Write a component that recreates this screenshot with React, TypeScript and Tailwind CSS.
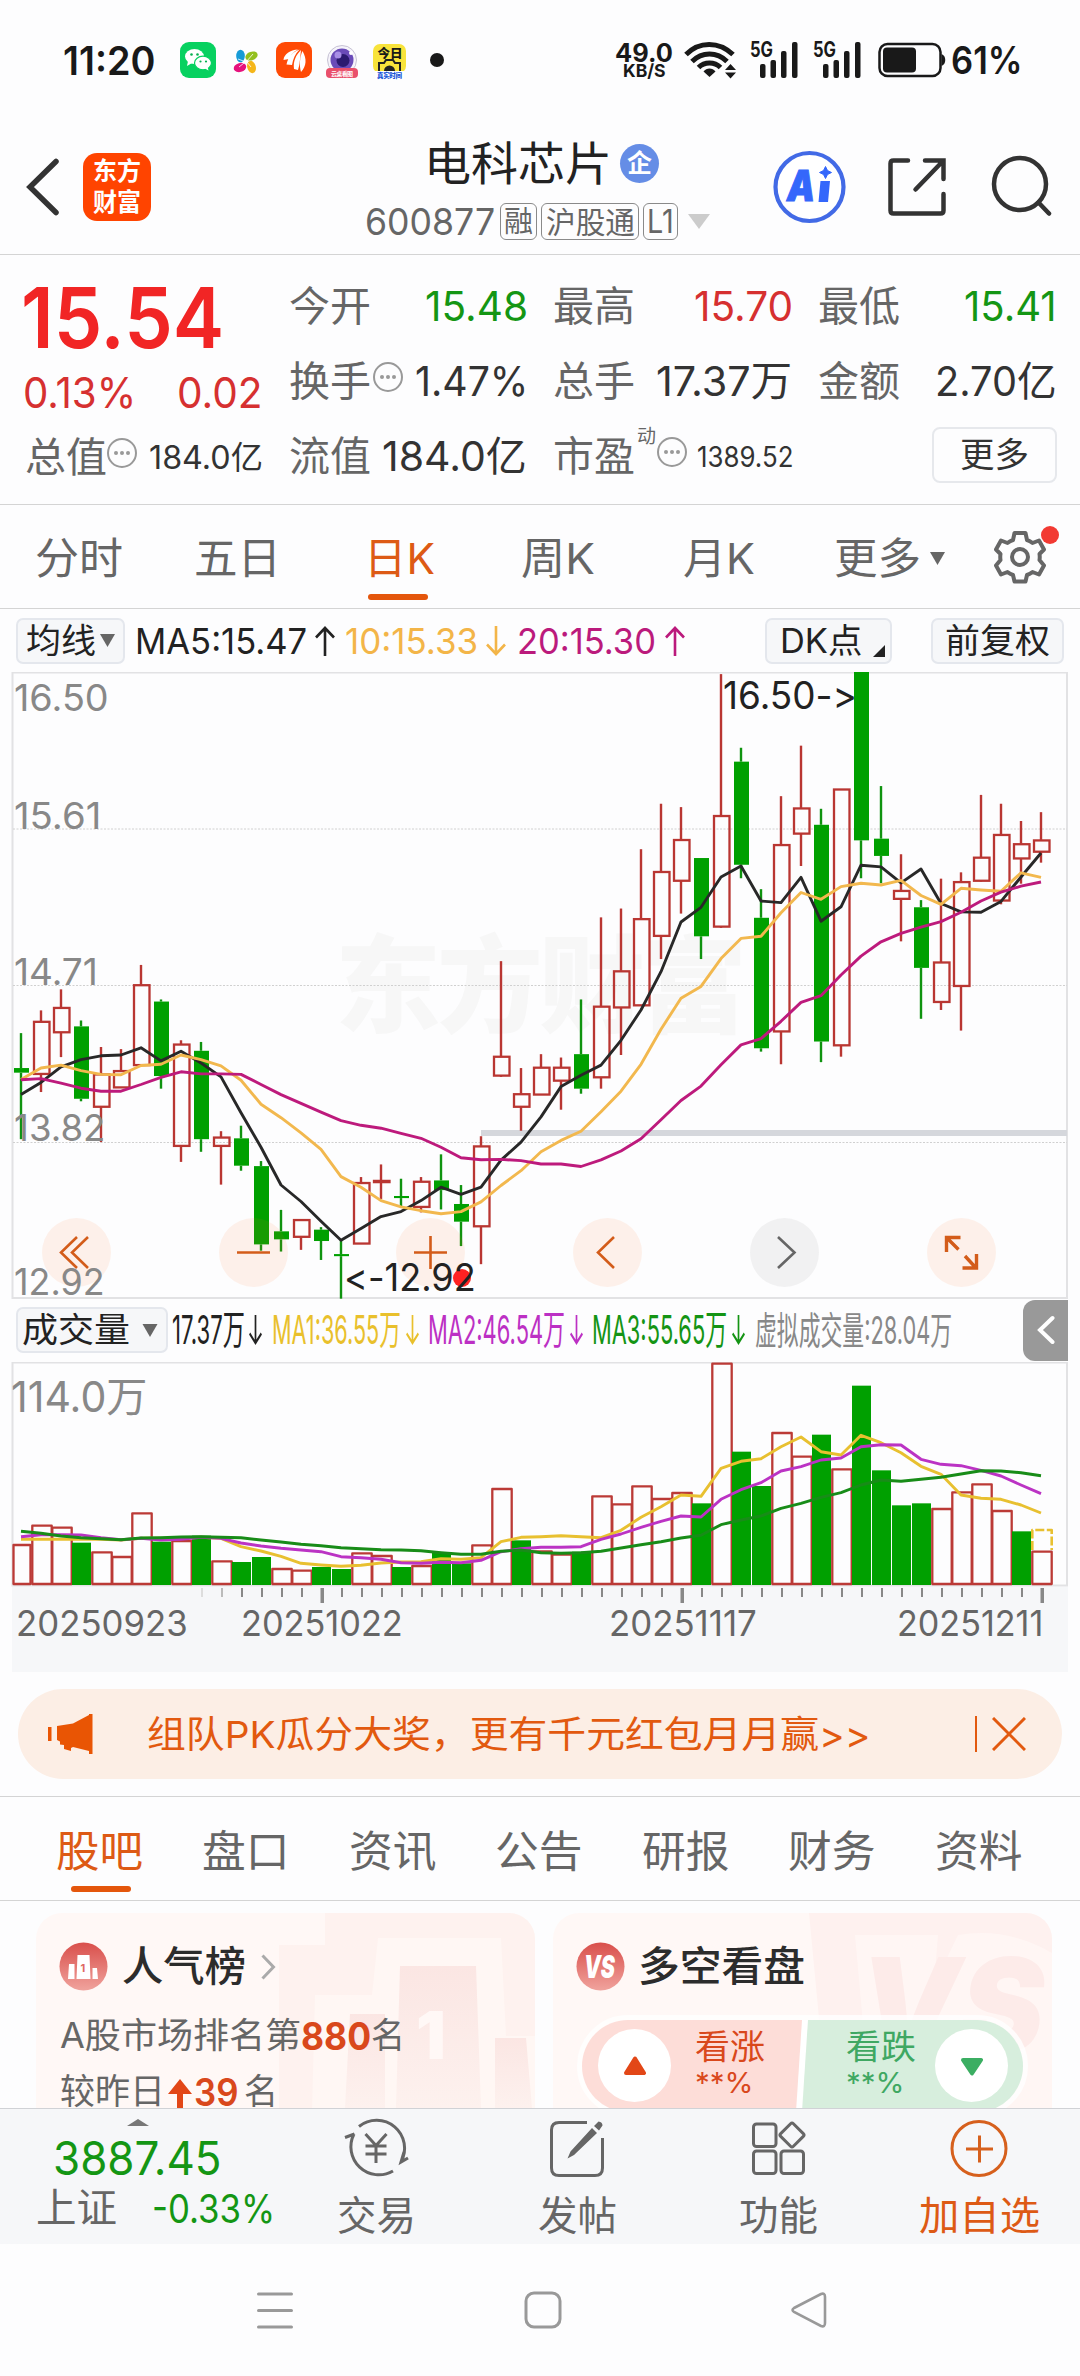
import React, { useLayoutEffect, useRef, useState } from "react";

/* Single line of text condensed or stretched to an exact width. */
function Fit({ w, className = "", children }: { w: number; className?: string; children: React.ReactNode }) {
  const ref = useRef<HTMLSpanElement>(null);
  const [scale, setScale] = useState(1);
  useLayoutEffect(() => {
    if (ref.current) setScale(w / ref.current.offsetWidth);
  }, [w]);
  return (
    <span className={"inline-block shrink-0 leading-none whitespace-nowrap " + className} style={{ width: w }}>
      <span ref={ref} className="inline-block origin-left" style={{ transform: `scaleX(${scale})` }}>
        {children}
      </span>
    </span>
  );
}

type Candle = [number, number, number, number, number];

/* [rising, high, body top, body bottom, low] in chart ticks */
const CANDLES: Candle[] = [
  [0, 886, 969, 980, 1138], [1, 832, 858, 983, 1026], [1, 782, 825, 884, 943], [0, 856, 870, 1042, 1048],
  [1, 919, 983, 1061, 1145], [1, 924, 975, 1015, 1015], [1, 724, 771, 962, 962], [0, 806, 811, 988, 1018],
  [1, 903, 912, 1154, 1192], [0, 907, 928, 1138, 1168], [1, 1119, 1133, 1154, 1246], [0, 1106, 1136, 1201, 1213],
  [0, 1190, 1202, 1388, 1403], [0, 1306, 1357, 1376, 1405], [1, 1328, 1329, 1370, 1401], [0, 1347, 1353, 1380, 1425],
  [0, 1378, 1411, 1416, 1517], [1, 1228, 1241, 1386, 1386], [1, 1198, 1236, 1240, 1280], [0, 1232, 1273, 1278, 1298],
  [1, 1228, 1238, 1299, 1312], [0, 1174, 1236, 1259, 1305], [0, 1247, 1292, 1334, 1392], [1, 1131, 1154, 1345, 1435],
  [1, 715, 941, 987, 990], [1, 969, 1030, 1061, 1118], [1, 936, 967, 1032, 1032], [1, 944, 967, 999, 1068],
  [0, 806, 936, 1018, 1030], [1, 611, 822, 991, 1018], [1, 590, 738, 825, 938], [1, 449, 614, 820, 820],
  [1, 341, 502, 655, 710], [1, 349, 426, 524, 602], [0, 469, 470, 656, 710], [1, 33, 369, 633, 636],
  [0, 208, 241, 486, 518], [0, 544, 612, 922, 930], [1, 323, 438, 882, 960], [1, 203, 351, 412, 489],
  [0, 353, 391, 906, 955], [1, 306, 306, 915, 942], [0, 28, 28, 428, 518], [0, 299, 424, 465, 530],
  [1, 461, 547, 567, 668], [0, 570, 587, 731, 852], [1, 519, 717, 812, 831], [1, 504, 526, 774, 880],
  [1, 320, 468, 524, 526], [1, 341, 414, 571, 580], [1, 382, 436, 471, 531], [1, 361, 427, 455, 481],
];

const MA5 = [1032, 1003, 966, 949, 940, 938, 921, 952, 929, 957, 990, 1075, 1157, 1247, 1286, 1333, 1378, 1350, 1322, 1310, 1284, 1252, 1269, 1252, 1188, 1145, 1085, 1013, 986, 962, 903, 831, 740, 622, 587, 515, 489, 572, 576, 516, 620, 586, 487, 491, 529, 496, 578, 598, 599, 573, 515, 458];
const MA10 = [996, 969, 962, 975, 984, 985, 963, 960, 938, 949, 964, 998, 1055, 1087, 1123, 1162, 1227, 1252, 1284, 1299, 1308, 1315, 1310, 1287, 1248, 1213, 1168, 1141, 1119, 1073, 1024, 960, 877, 803, 775, 709, 661, 656, 600, 552, 568, 538, 530, 534, 523, 559, 580, 542, 546, 549, 505, 516];
const MA20 = [997, 994, 1005, 1017, 1024, 1024, 1008, 991, 978, 983, 983, 984, 1008, 1032, 1053, 1074, 1094, 1105, 1112, 1124, 1136, 1157, 1182, 1187, 1186, 1189, 1197, 1197, 1203, 1187, 1166, 1137, 1092, 1046, 1012, 961, 914, 899, 858, 813, 797, 748, 703, 669, 649, 634, 621, 599, 572, 551, 537, 527];

const VOLUMES = [762, 704, 710, 758, 784, 798, 667, 755, 750, 737, 811, 816, 801, 834, 839, 831, 837, 787, 795, 831, 825, 788, 820, 763, 594, 751, 781, 791, 785, 616, 640, 586, 624, 606, 640, 218, 485, 588, 426, 497, 434, 535, 287, 541, 646, 640, 654, 604, 580, 660, 724, 782];
const FALLING_VOLUME = new Set([3, 7, 9, 11, 12, 15, 16, 19, 21, 22, 25, 28, 34, 36, 37, 40, 42, 43, 44, 45, 50]);
const VMA1 = [748, 748, 748, 748, 748, 750, 745, 745, 745, 742, 745, 770, 783, 799, 820, 825, 829, 826, 819, 816, 815, 806, 808, 803, 755, 742, 740, 737, 740, 743, 721, 682, 650, 615, 619, 535, 514, 506, 470, 441, 485, 495, 436, 458, 488, 529, 553, 615, 625, 628, 645, 669];
const VMA2 = [740, 734, 734, 735, 743, 749, 745, 750, 748, 742, 745, 759, 768, 775, 780, 785, 800, 803, 808, 818, 820, 817, 818, 811, 785, 776, 772, 772, 770, 748, 732, 712, 694, 678, 681, 628, 599, 578, 543, 530, 510, 504, 470, 464, 465, 508, 523, 527, 541, 558, 585, 611];
const VMA3 = [724, 730, 738, 743, 746, 749, 744, 743, 741, 740, 742, 743, 750, 756, 763, 767, 773, 776, 779, 780, 782, 788, 793, 793, 784, 780, 788, 790, 788, 784, 774, 764, 755, 744, 736, 704, 690, 678, 655, 640, 622, 608, 585, 570, 574, 568, 562, 552, 542, 543, 548, 557];

const cx = (i: number) => 21 + i * 20;
const py = (v: number) => (v - 28) / 2.376;
const vy = (v: number) => (v - 216) / 3;
const line = (d: number[], y: (v: number) => number) => d.map((v, i) => `${cx(i)},${y(v).toFixed(1)}`).join(" ");

function StatusBar() {
  const signal = (
    <svg width="48" height="38" viewBox="0 0 48 38" fill="#191919" className="shrink-0 overflow-visible">
      <text x="0" y="16" fontFamily="Inter" fontWeight="700" fontSize="21" textLength="23" lengthAdjust="spacingAndGlyphs">5G</text>
      <rect x="10" y="23" width="5.500" height="14" rx="2" />
      <rect x="20.500" y="19" width="5.500" height="18" rx="2" />
      <rect x="31" y="10" width="5.500" height="27" rx="2" />
      <rect x="42" y="1" width="5.500" height="36" rx="2" />
    </svg>
  );
  return (
    <div className="flex h-[120px] items-center text-[#191919]">
      <Fit w={92} className="ml-[63px] text-[39px] font-semibold">11:20</Fit>
      <svg className="ml-[25px] shrink-0" width="36" height="36" viewBox="0 0 36 36">
        <rect width="36" height="36" rx="9" fill="#07d160" />
        <g fill="#fff">
          <ellipse cx="14.500" cy="14.500" rx="9.500" ry="7.500" />
          <path d="M8 19l-1 5 5-3z" />
          <ellipse cx="23" cy="21" rx="8.500" ry="6.800" stroke="#07d160" strokeWidth="1.200" />
          <path d="M25 26.500l3.500 2-1-4z" />
        </g>
        <g fill="#07b050"><circle cx="11.500" cy="12.500" r="1.300" /><circle cx="17.500" cy="12.500" r="1.300" /><circle cx="20.500" cy="19.500" r="1.100" /><circle cx="26" cy="19.500" r="1.100" /></g>
      </svg>
      <svg className="ml-[17px] mt-1 shrink-0" width="26" height="26" viewBox="0 0 26 26">
        <ellipse cx="7.500" cy="7" rx="4.300" ry="6.300" fill="#169bd7" />
        <ellipse cx="18.500" cy="7" rx="6.300" ry="4.300" fill="#93c01f" transform="rotate(-20 18.500 7)" />
        <ellipse cx="7" cy="18.500" rx="6.300" ry="4.500" fill="#e6127d" transform="rotate(-15 7 18.500)" />
        <ellipse cx="18.500" cy="18" rx="4.300" ry="6.300" fill="#f5b61a" transform="rotate(-15 18.500 18)" />
        <path d="M5 10l8 3 7-8M11 14l-5 4M14 13l4 5" stroke="#fff" strokeWidth=".8" fill="none" />
      </svg>
      <svg className="ml-[17px] shrink-0" width="36" height="36" viewBox="0 0 36 36">
        <rect width="36" height="36" rx="9" fill="#ff4a05" />
        <path d="M7.500 18C8 12 14 8 22 7.500 17 10 14 14 13 17z M10.500 22.500C12 15 17 10 23.500 7.500 19 12 17 17 16 23z M18 27C17 19 20 13 25 8c-1 8-1 14-3 20z M25 30c-2-7-1-16 1.500-21 4.500 8 4 15-1.500 21z" fill="#fff" />
      </svg>
      <svg className="mt-1 ml-[13px] shrink-0" width="34" height="34" viewBox="0 0 34 34">
        <circle cx="17" cy="15" r="14.500" fill="#f5f3fa" stroke="#b9b4c9" strokeWidth=".8" />
        <circle cx="17" cy="15" r="11.500" fill="#6a4bb8" />
        <circle cx="18" cy="15.500" r="6.500" fill="#2c1a70" />
        <circle cx="13" cy="10" r="3.500" fill="#a88ee6" />
        <circle cx="26" cy="8" r="2" fill="#fff" />
        <rect x="1" y="23" width="32" height="10" rx="4" fill="#e9506c" />
        <text x="6" y="30.500" fontSize="6" fill="#fff" fontWeight="700" textLength="22" fontFamily="Noto Sans CJK SC">云桌看图</text>
      </svg>
      <svg className="mt-1 ml-[13px] shrink-0 overflow-visible" width="36" height="36" viewBox="0 0 36 36">
        <rect x="1" width="33" height="29" rx="7" fill="#f8e33b" />
        <text x="5.500" y="13.500" fontSize="12.500" fill="#191919" fontWeight="900" textLength="25" fontFamily="Noto Sans CJK SC">今日</text>
        <path d="M7 27v-8h5l2-3h7l2 3h5v8" fill="none" stroke="#222" strokeWidth="2" />
        <path d="M12 27a5.500 5.500 0 0 1 11 0z" fill="#222" />
        <rect x="3" y="27" width="29" height="8" fill="#fff" />
        <text x="5" y="34" fontSize="6.500" fill="#1553d8" fontWeight="900" textLength="25" fontFamily="Noto Sans CJK SC">真实时间</text>
      </svg>
      <span className="ml-[22px] h-[14px] w-[14px] rounded-full bg-[#191919]" />
      <div className="ml-[171px] flex flex-col items-center">
        <Fit w={58} className="h-[22px] pt-px text-[25px] leading-[20px] font-bold">49.0</Fit>
        <Fit w={43} className="h-[18px] text-[18px] font-bold">KB/S</Fit>
      </div>
      <svg className="ml-[11px] shrink-0" width="52" height="38" viewBox="0 0 52 38" fill="none" stroke="#191919" strokeWidth="5">
        <path d="M2 13.500C15 0 35 0 49 13.500" />
        <path d="M8 20.500c10-10 25-10 35 0" />
        <path d="M14.500 26.500c6-6 16-6 22 0" />
        <path d="M25.500 36l-6-5.500c3-4 9-4 12 0z" fill="#191919" stroke="none" />
        <path d="M41 29l5.500-6 5.500 6zM41 31.500l5.500 6 5.500-6z" fill="#191919" stroke="none" />
      </svg>
      <div className="ml-[14px]">{signal}</div>
      <div className="ml-[15px]">{signal}</div>
      <svg className="ml-[17px] shrink-0" width="68" height="36" viewBox="0 0 68 36">
        <rect x="1.500" y="2" width="61" height="32" rx="8" fill="none" stroke="#191919" strokeWidth="2.500" />
        <rect x="5" y="5.500" width="33" height="25" rx="4" fill="#191919" />
        <path d="M63.500 12c5 1.500 5 10.500 0 12z" fill="#191919" />
      </svg>
      <Fit w={72} className="ml-[5px] text-[38px] font-semibold">61%</Fit>
    </div>
  );
}

function Header() {
  const tag = "flex h-[37px] items-center justify-center rounded-[6px] border-[1.500px] border-[#8a8a8a] text-[#666]";
  return (
    <div className="flex h-[135px] items-center border-b border-[#d4d4d4]">
      <svg className="ml-[25px] shrink-0" width="36" height="60" viewBox="0 0 36 60" fill="none" stroke="#333" strokeWidth="5.500" strokeLinecap="round">
        <path d="M31 4.500L5 30l26 25.500" />
      </svg>
      <div className="ml-[22px] flex h-[68px] w-[68px] shrink-0 flex-col items-center justify-center rounded-[14px] bg-[#ff4400] text-[25px] leading-[29px] font-bold text-white">
        <Fit w={48} className="h-[29px]">东方</Fit>
        <Fit w={48} className="h-[27px] pt-0.5">财富</Fit>
      </div>
      <div className="mt-[6px] ml-[214px] flex w-[346px] shrink-0 flex-col">
        <div className="flex items-center pl-[59px]">
          <Fit w={188} className="text-[46px] text-[#222]">电科芯片</Fit>
          <span className="ml-[8px] flex h-[39px] w-[39px] items-center justify-center rounded-full bg-[#658de6] text-[25px] leading-none font-bold text-white">企</span>
        </div>
        <div className="mt-[17px] flex items-center">
          <Fit w={130} className="text-[37px] text-[#666]">600877</Fit>
          <span className={tag + " ml-[5px] w-[37px] text-[29px]"}>融</span>
          <span className={tag + " ml-[4px] w-[98px]"}><Fit w={89} className="text-[30px]">沪股通</Fit></span>
          <span className={tag + " ml-[4px] w-[35px]"}><Fit w={27} className="text-[33px]">L1</Fit></span>
          <svg className="ml-[10px]" width="22" height="15" viewBox="0 0 22 15"><path d="M0 0h22L11 15z" fill="#ccc" /></svg>
        </div>
      </div>
      <svg className="ml-[62px] shrink-0" width="74" height="74" viewBox="0 0 74 74">
        <circle cx="36.500" cy="37" r="34" fill="#fff" stroke="#426ae6" strokeWidth="4.200" />
        <g fill="#3467fb" fontFamily="Inter" fontWeight="900" fontStyle="italic">
          <text x="14" y="51" fontSize="42" stroke="#3467fb" textLength="28" lengthAdjust="spacingAndGlyphs">A</text>
          <path d="M47.500 31h9.500l-2 21h-9.500z" />
          <path d="M52.500 16.500l2 4 4 2-4 2-2 4-2-4-4-2 4-2z" stroke="#3467fb" />
        </g>
      </svg>
      <svg className="ml-[40px] shrink-0" width="60" height="62" viewBox="0 0 60 62" fill="none" stroke="#333" strokeWidth="4.500" strokeLinecap="round">
        <path d="M21 4.500H6.500Q3.500 4.500 3.500 7.500V54.500Q3.500 57.500 6.500 57.500H53.500Q56.500 57.500 56.500 54.500V38" />
        <path d="M38 4.500H56.500V23M56 5L28.500 33.500" />
      </svg>
      <svg className="ml-[43px] shrink-0" width="62" height="64" viewBox="0 0 62 64" fill="none" stroke="#333" strokeWidth="4.500" strokeLinecap="round">
        <circle cx="30" cy="29" r="26" />
        <path d="M48.500 47.500L59 58.500" />
      </svg>
    </div>
  );
}

function Dots() {
  return (
    <svg className="mb-[10px] shrink-0" width="30" height="30" viewBox="0 0 30 30">
      <circle cx="15" cy="15" r="14" fill="none" stroke="#999" strokeWidth="2" />
      <g fill="#999"><circle cx="9" cy="15" r="2" /><circle cx="15" cy="15" r="2" /><circle cx="21" cy="15" r="2" /></g>
    </svg>
  );
}

const row = "flex h-[75px] items-center text-[41px] text-[#333]";
const label = "text-[#666]";

function Quote() {
  return (
    <div className="flex h-[250px] gap-[26px] border-b border-[#d4d4d4] pt-[14px] pl-[25px] text-[#333]">
      <div className="w-[238px]">
        <div className="flex h-[98px] items-center"><Fit w={203} className="-ml-[4px] text-[84px] font-semibold text-[#f12525]">15.54</Fit></div>
        <div className="flex h-[51px] items-center justify-between text-[42px] text-[#d63030]">
          <Fit w={113} className="-ml-[2px]">0.13%</Fit><Fit w={86}>0.02</Fit>
        </div>
        <div className={row + " mt-0.5"}>
          <Fit w={82} className={label}>总值</Fit><Dots />
          <Fit w={114} className="ml-auto text-[32px]">184.0亿</Fit>
        </div>
      </div>
      <div className="w-[238px]">
        <div className={row + " justify-between"}><Fit w={82} className={label}>今开</Fit><Fit w={103} className="-mr-px text-[#149614]">15.48</Fit></div>
        <div className={row}><Fit w={82} className={label}>换手</Fit><span className="ml-0.5 flex"><Dots /></span><Fit w={113} className="-mr-px ml-auto">1.47%</Fit></div>
        <div className={row + " justify-between"}><Fit w={82} className={label}>流值</Fit><Fit w={145}>184.0亿</Fit></div>
      </div>
      <div className="w-[239px]">
        <div className={row + " justify-between"}><Fit w={82} className={label}>最高</Fit><Fit w={99} className="-mr-px text-[#d63030]">15.70</Fit></div>
        <div className={row + " justify-between"}><Fit w={82} className={label}>总手</Fit><Fit w={136}>17.37万</Fit></div>
        <div className={row}>
          <Fit w={82} className={label}>市盈</Fit>
          <span className="mb-[40px] ml-0.5 text-[19px] leading-none text-[#666]">动</span>
          <span className="ml-px flex"><Dots /></span>
          <Fit w={96} className="-mr-px ml-auto text-[28px]">1389.52</Fit>
        </div>
      </div>
      <div className="w-[239px]">
        <div className={row + " justify-between"}><Fit w={82} className={label}>最低</Fit><Fit w={93} className="text-[#149614]">15.41</Fit></div>
        <div className={row + " justify-between"}><Fit w={82} className={label}>金额</Fit><Fit w={122}>2.70亿</Fit></div>
        <div className={row + " justify-end"}>
          <div className="mb-[4px] flex h-[56px] w-[125px] items-center justify-center rounded-[8px] border-2 border-[#e6e8ec]">
            <Fit w={69} className="text-[34px]">更多</Fit>
          </div>
        </div>
      </div>
    </div>
  );
}

function PeriodTabs() {
  return (
    <div className="relative flex h-[104px] items-center border-b border-[#d4d4d4] pt-1 text-[43px] text-[#666]">
      <Fit w={88} className="ml-[35px]">分时</Fit>
      <Fit w={87} className="ml-[71px]">五日</Fit>
      <Fit w={71} className="ml-[83px] text-[#dd5a15]">日K</Fit>
      <Fit w={74} className="ml-[86px]">周K</Fit>
      <Fit w={72} className="ml-[88px]">月K</Fit>
      <Fit w={87} className="ml-[79px]">更多</Fit>
      <svg className="ml-[9px]" width="15" height="13" viewBox="0 0 15 13"><path d="M0 0h15L7.500 13z" fill="#666" /></svg>
      <svg className="mb-1 ml-[48px]" width="54" height="54" viewBox="-27 -27 54 54" fill="none" stroke="#666" strokeWidth="4" strokeLinejoin="round">
        <path d="M-5.500-24H5.500L7-17Q10-16 12.500-14L19-16.500 24-7.500 19.500-3Q20 0 19.500 3L24 8.500 19 17.500 12.500 15Q10 17 7 18L5.500 24.500H-5.500L-7 18Q-10 17-12.500 15L-19 17.500-24 8.500-19.500 3Q-20 0-19.500-3L-24-7.500-19-16.500-12.500-14Q-10-16-7-17z" />
        <circle r="8" />
      </svg>
      <span className="absolute top-[21px] left-[1041px] h-[18px] w-[18px] rounded-full bg-[#f23a33]" />
      <span className="absolute bottom-[8px] left-[368px] h-[6px] w-[60px] rounded-full bg-[#e4560c]" />
    </div>
  );
}

function Arrow({ up, color, w = 20, className = "" }: { up?: boolean; color: string; w?: number; className?: string }) {
  return (
    <svg className={"shrink-0 " + className} width={w} height="30" viewBox="0 0 20 30" preserveAspectRatio="none" fill="none" stroke={color} strokeWidth="2.600">
      {up ? <path d="M10 30V2M1 11.500L10 2l9 9.500" /> : <path d="M10 0v28M1 18.500L10 28l9-9.500" />}
    </svg>
  );
}

const pill = "flex h-[46px] shrink-0 items-center rounded-[7px] border-2 border-[#e4e7ed] bg-[#f6f7f9] text-[34px] text-[#222]";

function AverageRow() {
  return (
    <div className="flex h-[63px] items-center text-[36px]">
      <div className={pill + " ml-[16px] w-[109px] pl-[8px]"}>
        <Fit w={70}>均线</Fit>
        <svg className="ml-[4px]" width="15" height="13" viewBox="0 0 15 13"><path d="M0 0h15L7.500 13z" fill="#666" /></svg>
      </div>
      <Fit w={172} className="ml-[10px] text-[#222]">MA5:15.47</Fit>
      <Arrow up color="#222" className="ml-[8px]" />
      <Fit w={133} className="ml-[10px] text-[#f3b548]">10:15.33</Fit>
      <Arrow color="#f3b548" className="ml-[8px]" />
      <Fit w={139} className="ml-[11px] text-[#bb1a7c]">20:15.30</Fit>
      <Arrow up color="#bb1a7c" className="ml-[9px]" />
      <div className={pill + " ml-[80px] w-[127px] pl-[13px]"}>
        <Fit w={82}>DK点</Fit>
        <svg className="mt-[21px] ml-[11px]" width="12" height="12" viewBox="0 0 12 12"><path d="M12 0v12H0z" fill="#222" /></svg>
      </div>
      <div className={pill + " ml-[39px] w-[133px] justify-center"}><Fit w={105}>前复权</Fit></div>
    </div>
  );
}

function PriceChart() {
  const labels: [string, number, string][] = [
    ["16.50", 95, "top-[7px]"], ["15.61", 87, "top-[125px]"], ["14.71", 84, "top-[281px]"], ["13.82", 91, "top-[437px]"], ["12.92", 91, "top-[591px]"],
  ];
  return (
    <div className="relative h-[626px]">
      <svg className="block" width="1080" height="627" viewBox="0 0 1080 627">
        <text x="335" y="352" fontSize="106" fontWeight="900" fontFamily="Noto Sans CJK SC" fill="#f7f7f7" textLength="412">东方财富</text>
        <rect x="12.500" y="0.500" width="1054.500" height="625.500" fill="none" stroke="#e2e2e4" strokeWidth="2" />
        {[157, 313.500, 470.500].map((y) => (
          <line key={y} x1="13" x2="1067" y1={y} y2={y} stroke="#d0d0d0" strokeDasharray="2 1.500" />
        ))}
        <rect x="481" y="458" width="586" height="6" fill="#d5d7dc" />
        {CANDLES.map(([up, h, t, b, l], i) => {
          const c = up ? "#b93632" : "#0f930f";
          return (
            <g key={i}>
              {py(t) - py(h) > 0.5 && <line x1={cx(i)} x2={cx(i)} y1={py(h)} y2={py(t)} stroke={c} strokeWidth="2.400" />}
              {py(l) - py(b) > 0.5 && <line x1={cx(i)} x2={cx(i)} y1={py(b)} y2={py(l)} stroke={c} strokeWidth="2.400" />}
              {up ? (
                <rect x={cx(i) - 7} y={py(t) + 0.5} width="15.500" height={Math.max(1, py(b) - py(t) - 0.5)} fill="none" stroke={c} strokeWidth="2.300" />
              ) : (
                <rect x={cx(i) - 7} y={py(t)} width="15" height={py(b) - py(t)} fill="#00a000" />
              )}
            </g>
          );
        })}
        <g fill="none" strokeWidth="2.900" strokeLinejoin="round">
          <polyline points={line(MA5, py)} stroke="#282828" />
          <polyline points={line(MA10, py)} stroke="#f2b84e" />
          <polyline points={line(MA20, py)} stroke="#bd1a7c" />
        </g>
        {[76.500, 253.500, 430.500, 607.500, 784.500, 961.500].map((x, i) => (
          <circle key={x} cx={x} cy="580.500" r="34.500" fill={i === 4 ? "#777" : "#ff6a20"} fillOpacity="0.090" />
        ))}
        <g fill="none" stroke="#d35c1a" strokeWidth="2.600">
          <path d="M77 565L61 580.500l16 15.500M88 565L72 580.500l16 15.500" />
          <path d="M237 580.500h33M414 580.500h33M430.500 564v33" />
          <path d="M614 565l-16 15.500 16 15.500" />
          <path d="M778 565l16.500 15.500-16.500 15.500" stroke="#666" />
          <path d="M946.500 580v-14.500h14M947 566l11.500 11.500M976.500 582v14h-14M976 596L965 584" strokeWidth="3.400" />
        </g>
        <circle cx="462" cy="606" r="9" fill="#f22" />
      </svg>
      {labels.map(([t, w, pos]) => (
        <Fit key={t} w={w} className={"absolute left-[14px] text-[37px] text-[#888] " + pos}>{t}</Fit>
      ))}
      <Fit w={134} className="absolute top-[4px] left-[723px] text-[38px] text-[#222] [font-feature-settings:'calt'_0]">16.50-&gt;</Fit>
      <Fit w={132} className="absolute top-[586px] left-[344px] text-[38px] text-[#222] [font-feature-settings:'calt'_0]">&lt;-12.92</Fit>
    </div>
  );
}

function VolumeHeader() {
  return (
    <div className="flex h-[64px] items-center text-[40px]">
      <div className={pill + " ml-[16px] w-[152px] pl-[4px]"}>
        <Fit w={108}>成交量</Fit>
        <svg className="ml-[12px]" width="16" height="13" viewBox="0 0 15 13"><path d="M0 0h15L7.500 13z" fill="#666" /></svg>
      </div>
      <Fit w={73} className="ml-[4px] text-[#222]">17.37万</Fit>
      <Arrow w={13} color="#222" className="ml-[4px]" />
      <Fit w={129} className="ml-[10px] text-[#e9c02c]">MA1:36.55万</Fit>
      <Arrow w={13} color="#e9c02c" className="ml-[5px]" />
      <Fit w={137} className="ml-[9px] text-[#bc30c4]">MA2:46.54万</Fit>
      <Arrow w={13} color="#bc30c4" className="ml-[5px]" />
      <Fit w={135} className="ml-[9px] text-[#149414]">MA3:55.65万</Fit>
      <Arrow w={13} color="#149414" className="ml-[5px]" />
      <Fit w={197} className="ml-[10px] text-[38px] text-[#888]">虚拟成交量:28.04万</Fit>
      <div className="mr-[12px] ml-auto flex h-[61px] w-[45px] items-center justify-center rounded-l-[12px] bg-[#999]">
        <svg width="18" height="30" viewBox="0 0 18 30" fill="none" stroke="#fff" strokeWidth="4" strokeLinecap="round"><path d="M15.500 3L3 15l12.500 12" /></svg>
      </div>
    </div>
  );
}

function VolumeChart() {
  return (
    <div className="relative">
      <svg className="block" width="1080" height="225" viewBox="0 0 1080 225">
        <rect x="12.500" y="0.500" width="1054.500" height="223" fill="none" stroke="#e2e2e4" strokeWidth="2" />
        <g fill="none" strokeWidth="2.300" strokeLinejoin="round">
          {VOLUMES.map((v, i) => FALLING_VOLUME.has(i) ? null : (
            <rect key={i} x={i ? cx(i) - 8.700 : 13.500} y={vy(v) + 1} width={i ? 19.400 : 17} height={221 - vy(v)} stroke="#bb3a36" />
          ))}
        </g>
        {VOLUMES.map((v, i) => FALLING_VOLUME.has(i) ? (
          <rect key={i} x={cx(i) - 9} y={vy(v)} width="19" height={223 - vy(v)} fill="#00a000" />
        ) : null)}
        <g fill="none" strokeWidth="2.900" strokeLinejoin="round">
          <polyline points={line(VMA1, vy)} stroke="#e8c030" />
          <polyline points={line(VMA2, vy)} stroke="#bb33c4" />
          <polyline points={line(VMA3, vy)} stroke="#188c18" />
          <path d="M1032.300 188V168h19.400v20" stroke="#e8c030" strokeWidth="2.600" strokeDasharray="9 2.500" />
        </g>
      </svg>
      <Fit w={136} className="absolute top-[14px] left-[11px] text-[42px] text-[#888]">114.0万</Fit>
    </div>
  );
}

function TimeAxis() {
  return (
    <div className="mx-[12px] h-[85px] bg-[#f6f7f9]">
      <svg className="block" width="1056" height="17" viewBox="12 0 1056 17">
        {CANDLES.map((_, i) => {
          if (i < 9) return null;
          const major = i === 15 || i === 33 || i === 51;
          return <rect key={i} x={cx(i) - (major ? 0.5 : 0)} y="1" width={major ? 3.5 : 2} height={major ? 15 : 9} fill={i === 9 ? "#ddd" : i === 10 ? "#bbb" : "#888"} />;
        })}
      </svg>
      <div className="flex pt-px text-[36px] text-[#666]">
        <Fit w={172} className="ml-[4px]">20250923</Fit>
        <Fit w={162} className="ml-[53px]">20251022</Fit>
        <Fit w={148} className="ml-[206px]">20251117</Fit>
        <Fit w={146} className="ml-[140px]">20251211</Fit>
      </div>
    </div>
  );
}

function Banner() {
  return (
    <div className="mx-[18px] mt-[17px] flex h-[90px] items-center rounded-full bg-[#fceee5] text-[#e2590f]">
      <svg className="ml-[29px] shrink-0" width="47" height="42" viewBox="0 0 47 42" fill="#e95504">
        <path d="M1 14h3.500v14H1zM10 13l16-2.500L42 2V1h3.500v40H42v-3L26 34l-2 1v3l-7-2v-4l-4-.500v-3L10 27z" />
      </svg>
      <Fit w={723} className="ml-[53px] text-[37px]">组队PK瓜分大奖，更有千元红包月月赢&gt;&gt;</Fit>
      <span className="ml-[105px] h-[36px] w-[1.500px] bg-[#e2590f]" />
      <svg className="ml-[15px]" width="34" height="34" viewBox="0 0 34 34" stroke="#e2590f" strokeWidth="3"><path d="M1 1l32 32M33 1L1 33" /></svg>
    </div>
  );
}

function SectionTabs() {
  return (
    <div className="mt-[17px] h-[105px] border-y border-[#d4d4d4]">
      <div className="flex h-full items-center gap-[59px] pt-[5px] pl-[56px] text-[43px] text-[#666]">
        <div className="relative flex text-[#dd5a15]">
          <Fit w={87}>股吧</Fit>
          <span className="absolute top-[56px] left-[15px] h-[6px] w-[60px] rounded-full bg-[#e4560c]" />
        </div>
        {["盘口", "资讯", "公告", "研报", "财务", "资料"].map((t) => <Fit key={t} w={87.5}>{t}</Fit>)}
      </div>
    </div>
  );
}

function Cards() {
  return (
    <div className="flex h-[207px] gap-[18px] overflow-hidden pt-[12px] pl-[36px]">
      <div className="relative h-[260px] w-[499px] overflow-hidden rounded-[26px] bg-[#fff8f6]">
        <svg className="absolute top-0 left-0" width="499" height="200" viewBox="0 0 499 200">
          <defs><linearGradient id="podium" x1="0" y1="0" x2="0" y2="1"><stop offset="0" stopColor="#fbe6e3" /><stop offset="1" stopColor="#fdf1ee" /></linearGradient></defs>
          <path d="M243 32h46V0h210v200H243z" fill="#fef2ef" />
          <path d="M279 82h57l6-57h123l5 98h29v77H276z" fill="#fff7f4" />
          <g fill="url(#podium)"><path d="M364 53h76l5 142h-85z" /><path d="M314 101h35v94h-40z" /><path d="M459 125h31l6 70h-37z" /></g>
          <text x="380" y="146" fontSize="66" fontWeight="900" fontFamily="Inter" fill="#fff8f6">1</text>
        </svg>
        <div className="relative flex h-[107px] items-center pl-[23px]">
          <svg width="49" height="49" viewBox="0 0 49 49">
            <defs><linearGradient id="badge" x1="0" y1="0" x2="0" y2="1"><stop offset="0" stopColor="#d94f4b" /><stop offset="1" stopColor="#f0a39d" /></linearGradient></defs>
            <circle cx="24.500" cy="24.500" r="24" fill="url(#badge)" />
            <path d="M10 22h5.500v15H9zM18.500 13h12l1 24H17.500zM33.500 26h4.500l1 11h-5.500z" fill="#fff" />
            <text x="21.500" y="30" fontSize="11" fontWeight="700" fontFamily="Inter" fill="#e06a64">1</text>
          </svg>
          <Fit w={124} className="ml-[14px] text-[41px] font-medium text-[#2c2c2c]">人气榜</Fit>
          <svg className="ml-[15px]" width="15" height="26" viewBox="0 0 15 26" fill="none" stroke="#aaa" strokeWidth="3"><path d="M1.500 1.500L12.500 13 1.500 24.500" /></svg>
        </div>
        <div className="relative -mt-[2px] flex h-[35px] items-center pl-[24px] text-[35px] text-[#666]">
          <Fit w={241}>A股市场排名第</Fit>
          <Fit w={70} className="text-[38px] font-bold text-[#d9481c]">880</Fit>
          <Fit w={34}>名</Fit>
        </div>
        <div className="relative mt-[20px] flex h-[37px] items-center pl-[24px] text-[35px] text-[#666]">
          <Fit w={105}>较昨日</Fit>
          <svg className="mt-1 ml-[3px]" width="24" height="30" viewBox="0 0 24 30"><path d="M12 0l12 15h-9v15H9V15H0z" fill="#e24717" /></svg>
          <Fit w={44} className="ml-[2px] text-[38px] font-semibold text-[#d9481c]">39</Fit>
          <Fit w={34} className="ml-[6px]">名</Fit>
        </div>
      </div>
      <div className="relative h-[260px] w-[499px] overflow-hidden rounded-[26px] bg-[#fff8f6]">
        <svg className="absolute top-0 left-0" width="499" height="200" viewBox="0 0 499 200">
          <path d="M256 0h243v200H275z" fill="#fef1ef" />
          <path d="M302 22h83l-4 50 24-50q50-8 94 18v160H318z" fill="#fff6f4" />
          <text x="306" y="140" fontSize="132" fontWeight="900" fontStyle="italic" fontFamily="Inter" fill="#fdebe9" textLength="185" lengthAdjust="spacingAndGlyphs">VS</text>
        </svg>
        <div className="relative flex h-[107px] items-center pl-[23px]">
          <svg width="49" height="49" viewBox="0 0 49 49">
            <circle cx="24.500" cy="24.500" r="24" fill="url(#badge)" />
            <text x="8" y="36" fontSize="32" fontWeight="900" fontStyle="italic" fontFamily="Inter" fill="#fff" textLength="31" lengthAdjust="spacingAndGlyphs">VS</text>
          </svg>
          <Fit w={167} className="ml-[13px] text-[41px] font-medium text-[#2c2c2c]">多空看盘</Fit>
        </div>
        <div className="relative ml-[29px] flex h-[92px] w-[441px] overflow-hidden rounded-full bg-white outline-[5px] outline-white/80">
          <svg className="absolute top-0 left-0" width="441" height="92" viewBox="0 0 441 92">
            <path d="M0 0h220l-6 92H0z" fill="#fdddd8" />
            <path d="M226 0h215v92H220z" fill="#d7eedd" />
          </svg>
          <div className="relative flex w-full items-center pb-px">
            <span className="ml-[16px] flex h-[73px] w-[73px] items-center justify-center rounded-full bg-white">
              <svg width="24" height="20" viewBox="0 0 24 20"><path d="M12 2.500L21 17H3z" fill="#e24717" stroke="#e24717" strokeWidth="4" strokeLinejoin="round" /></svg>
            </span>
            <div className="mb-[4px] ml-[24px] flex flex-col text-[#d9481c]">
              <Fit w={70} className="text-[34px]">看涨</Fit>
              <Fit w={59} className="mt-1 text-[29px]">**%</Fit>
            </div>
            <div className="mb-[4px] ml-[81px] flex flex-col text-[#3fa862]">
              <Fit w={70} className="text-[34px]">看跌</Fit>
              <Fit w={59} className="mt-1 text-[29px]">**%</Fit>
            </div>
            <span className="ml-[19px] flex h-[73px] w-[73px] items-center justify-center rounded-full bg-white">
              <svg width="24" height="20" viewBox="0 0 24 20"><path d="M12 17.500L21 4H3z" fill="#3bae62" stroke="#3bae62" strokeWidth="4" strokeLinejoin="round" /></svg>
            </span>
          </div>
        </div>
      </div>
    </div>
  );
}

function ActionBar() {
  const item = "flex flex-col items-center";
  return (
    <div className="flex h-[136px] border-t border-[#d0d2d6] bg-[#f6f7f9] text-[40px] text-[#666]">
      <div className="w-[300px] shrink-0">
        <svg className="mt-[10px] ml-[127px] block" width="22" height="7" viewBox="0 0 22 7"><path d="M11 0l11 7H0z" fill="#777" /></svg>
        <div className="mt-[8px] flex h-[48px] items-center"><Fit w={169} className="ml-[53px] text-[46px] text-[#149614]">3887.45</Fit></div>
        <div className="mt-[3px] flex h-[46px] items-center">
          <Fit w={81} className="ml-[36px]">上证</Fit>
          <Fit w={123} className="ml-[35px] text-[39px] text-[#149614]">-0.33%</Fit>
        </div>
      </div>
      <div className={item + " ml-[26px] w-[100px] shrink-0 pt-[9px]"}>
        <svg width="68" height="62" viewBox="0 0 68 62" fill="none" stroke="#666" strokeWidth="3">
          <path d="M17 8.500A28 28 0 0 1 59 44M3 19.500l9.500-3.500M12 16A28 28 0 0 0 51 53M66 40l-7 4 3-10" />
          <path d="M23.500 16L34 27.500 44.500 16M34 27.500V45M23.500 28h21M23.500 36h21" />
        </svg>
        <Fit w={79} className="mt-[16px]">交易</Fit>
      </div>
      <div className={item + " ml-[101px] w-[100px] shrink-0 pt-[9px]"}>
        <svg width="60" height="62" viewBox="0 0 60 62" fill="none" stroke="#666" strokeWidth="3">
          <path d="M40 4.500H12Q4.500 4.500 4.500 12V50Q4.500 57.500 12 57.500H48Q55.500 57.500 55.500 50V20" />
          <path d="M45 10l5 5-23 22-6.500 3.500 3-7zM47 8l4.500-4.500q4 .5 4 4L52 12.500z" fill="#666" stroke="none" />
        </svg>
        <Fit w={79} className="mt-[16px]">发帖</Fit>
      </div>
      <div className={item + " ml-[101px] w-[100px] shrink-0 pt-[9px]"}>
        <svg width="60" height="62" viewBox="0 0 60 62" fill="none" stroke="#666" strokeWidth="3">
          <rect x="5.500" y="6" width="22.500" height="22.500" rx="3" />
          <rect x="5.500" y="33" width="22.500" height="22.500" rx="3" />
          <rect x="33" y="33" width="22.500" height="22.500" rx="3" />
          <rect x="35" y="8" width="18" height="18" rx="2" transform="rotate(45 44 17)" />
        </svg>
        <Fit w={79} className="mt-[16px]">功能</Fit>
      </div>
      <div className={item + " ml-[89px] w-[124px] shrink-0 pt-[9px] text-[#dd5a15]"}>
        <svg width="60" height="62" viewBox="0 0 60 62" fill="none" stroke="#d6601d" strokeWidth="3">
          <circle cx="30" cy="30.500" r="27" />
          <path d="M17 31h27M30.500 17.500v27" />
        </svg>
        <Fit w={121} className="mt-[16px]">加自选</Fit>
      </div>
    </div>
  );
}

function SystemNav() {
  return (
    <div className="flex h-[132px] items-center text-[#999]">
      <svg className="ml-[257px]" width="36" height="38" viewBox="0 0 36 38" stroke="#999" strokeWidth="3" strokeLinecap="round"><path d="M1.500 3h33M1.500 19.500h33M1.500 36h33" /></svg>
      <svg className="ml-[231px]" width="38" height="38" viewBox="0 0 38 38" fill="none" stroke="#999" strokeWidth="3"><rect x="2" y="2" width="34" height="34" rx="8" /></svg>
      <svg className="ml-[228px]" width="38" height="38" viewBox="0 0 38 38" fill="none" stroke="#999" strokeWidth="2.600"><path d="M4 17L31 3Q35 1.500 35 6V32Q35 36.500 31 35L4 21Q1 19 4 17z" /></svg>
    </div>
  );
}

export default function App() {
  return (
    <div className="h-[2376px] w-[1080px] overflow-hidden bg-[#fdfdfe] font-['Inter','Noto_Sans_CJK_SC',sans-serif]">
      <StatusBar />
      <Header />
      <Quote />
      <PeriodTabs />
      <AverageRow />
      <PriceChart />
      <VolumeHeader />
      <VolumeChart />
      <TimeAxis />
      <Banner />
      <SectionTabs />
      <Cards />
      <ActionBar />
      <SystemNav />
    </div>
  );
}
